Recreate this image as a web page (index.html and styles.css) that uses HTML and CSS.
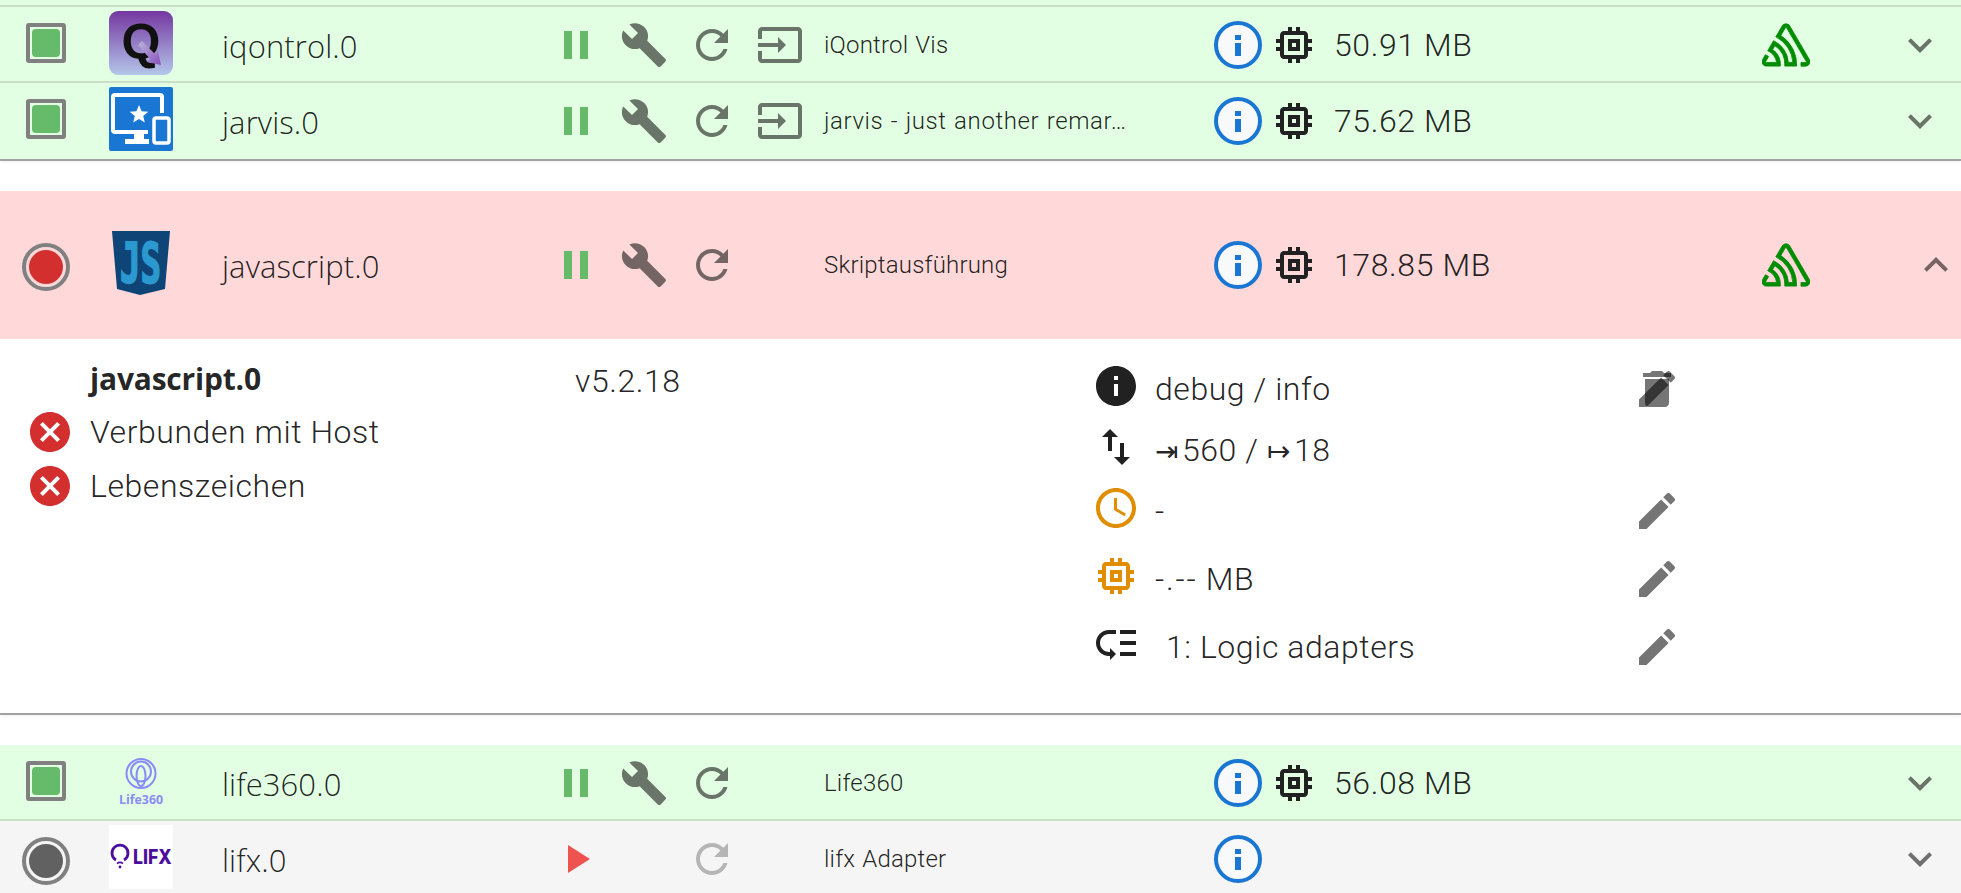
FILE: index.html
```html
<!DOCTYPE html>
<html lang="de">
<head>
<meta charset="utf-8">
<title>Instanzen</title>
<link rel="stylesheet" href="styles.css">
</head>
<body>
<svg class="defs" xmlns="http://www.w3.org/2000/svg">
  <symbol id="pause" viewBox="0 0 24 24"><path d="M6 19h4V5H6v14zm8-14v14h4V5h-4z"/></symbol>
  <symbol id="play" viewBox="0 0 24 24"><path d="M8 5v14l11-7z"/></symbol>
  <symbol id="build" viewBox="0 0 24 24"><path d="M22.7 19l-9.1-9.1c.9-2.3.4-5-1.5-6.9-2-2-5-2.4-7.4-1.3L9 6 6 9 1.6 4.7C.4 7.1.9 10.1 2.9 12.1c1.9 1.9 4.6 2.4 6.9 1.5l9.1 9.1c.4.4 1 .4 1.4 0l2.3-2.3c.5-.4.5-1.1.1-1.4z"/></symbol>
  <symbol id="refresh" viewBox="0 0 24 24"><path d="M17.65 6.35C16.2 4.9 14.21 4 12 4c-4.42 0-7.99 3.58-7.99 8s3.57 8 7.99 8c3.73 0 6.84-2.55 7.73-6h-2.08c-.82 2.33-3.04 4-5.65 4-3.31 0-6-2.69-6-6s2.69-6 6-6c1.66 0 3.14.69 4.22 1.78L13 11h7V4l-2.35 2.35z"/></symbol>
  <symbol id="input" viewBox="0 0 24 24"><path d="M21 3.01H3c-1.1 0-2 .9-2 2V9h2V4.99h18v14.03H3V15H1v4.01c0 1.1.9 1.98 2 1.98h18c1.1 0 2-.88 2-1.98v-14c0-1.11-.9-2-2-2zM11 16l4-4-4-4v3H1v2h10v3z"/></symbol>
  <symbol id="memory" viewBox="0 0 24 24"><path d="M15 9H9v6h6V9zm-2 4h-2v-2h2v2zm8-2V9h-2V7c0-1.1-.9-2-2-2h-2V3h-2v2h-2V3H9v2H7c-1.1 0-2 .9-2 2v2H3v2h2v2H3v2h2v2c0 1.1.9 2 2 2h2v2h2v-2h2v2h2v-2h2c1.1 0 2-.9 2-2v-2h2v-2h-2v-2h2zm-4 6H7V7h10v10z"/></symbol>
  <symbol id="sentry" viewBox="0 0 24 24"><path d="M13.91 2.505c-.873-1.448-2.972-1.448-3.844 0L6.904 7.92a15.478 15.478 0 0 1 8.53 12.811h-2.221A13.301 13.301 0 0 0 5.784 9.814l-2.926 5.06a7.65 7.65 0 0 1 4.435 5.848H2.194a.365.365 0 0 1-.298-.534l1.413-2.402a5.16 5.16 0 0 0-1.614-.913L.296 19.275a2.182 2.182 0 0 0 .812 2.999 2.24 2.24 0 0 0 1.086.288h6.983a9.322 9.322 0 0 0-3.845-8.318l1.11-1.922a11.47 11.47 0 0 1 4.95 10.24h5.915a17.242 17.242 0 0 0-7.885-15.28l2.244-3.845a.37.37 0 0 1 .504-.13c.255.14 9.75 16.708 9.928 16.9a.365.365 0 0 1-.327.543h-2.287c.029.612.029 1.223 0 1.831h2.297a2.206 2.206 0 0 0 1.922-3.31z"/></symbol>
  <symbol id="more" viewBox="0 0 24 24"><path d="M16.59 8.59L12 13.17 7.41 8.59 6 10l6 6 6-6z"/></symbol>
  <symbol id="less" viewBox="0 0 24 24"><path d="M12 8l-6 6 1.41 1.41L12 10.83l4.59 4.58L18 14z"/></symbol>
  <symbol id="cancel" viewBox="0 0 24 24"><path d="M12 2C6.47 2 2 6.47 2 12s4.47 10 10 10 10-4.47 10-10S17.53 2 12 2zm5 13.59L15.59 17 12 13.41 8.41 17 7 15.59 10.59 12 7 8.41 8.41 7 12 10.59 15.59 7 17 8.41 13.41 12 17 15.59z"/></symbol>
  <symbol id="info" viewBox="0 0 24 24"><path d="M12 2C6.48 2 2 6.48 2 12s4.48 10 10 10 10-4.48 10-10S17.52 2 12 2zm1 15h-2v-6h2v6zm0-8h-2V7h2v2z"/></symbol>
  <symbol id="swap" viewBox="0 0 24 24"><path d="M16 17.01V10h-2v7.01h-3L15 21l4-3.99h-3zM9 3L5 6.99h3V14h2V6.99h3L9 3z"/></symbol>
  <symbol id="clock" viewBox="0 0 24 24"><path d="M11.99 2C6.47 2 2 6.48 2 12s4.47 10 9.99 10C17.52 22 22 17.52 22 12S17.52 2 11.99 2zM12 20c-4.42 0-8-3.58-8-8s3.58-8 8-8 8 3.58 8 8-3.58 8-8 8zM12.5 7H11v6l5.25 3.15.75-1.23-4.5-2.67z"/></symbol>
  <symbol id="group" viewBox="0 0 24 24"><path d="M14 5h8v2h-8zm0 5.5h8v2h-8zm0 5.5h8v2h-8zM2 11.5C2 15.08 4.92 18 8.5 18H9v2l3-3-3-3v2h-.5C6.02 16 4 13.98 4 11.5S6.02 7 8.5 7H12V5H8.5C4.92 5 2 7.92 2 11.5z"/></symbol>
  <symbol id="edit" viewBox="0 0 24 24"><path d="M3 17.25V21h3.75L17.81 9.94l-3.75-3.75L3 17.25zM20.71 7.04c.39-.39.39-1.02 0-1.41l-2.34-2.34c-.39-.39-1.02-.39-1.41 0l-1.83 1.83 3.75 3.75 1.83-1.83z"/></symbol>
  <symbol id="delete" viewBox="0 0 24 24"><path d="M6 19c0 1.1.9 2 2 2h8c1.1 0 2-.9 2-2V7H6v12zM19 4h-3.5l-1-1h-5l-1 1H5v2h14V4z"/></symbol>
  <symbol id="infoline" viewBox="0 0 48 48">
    <circle class="info-ring" cx="24" cy="24" r="22"/>
    <rect class="info-mark" x="21" y="14" width="6" height="5"/>
    <rect class="info-mark" x="21" y="22" width="6" height="13"/>
  </symbol>
</svg>

<div class="row row-green row-stub"></div>

<section class="group">
  <div class="row row-green">
    <div class="status-square"><span class="status-square-fill"></span></div>
    <svg class="logo" viewBox="0 0 64 64">
      <defs>
        <linearGradient id="iqbg" x1="0" y1="0" x2="0" y2="1"><stop offset="0" stop-color="#7437a0"/><stop offset="1" stop-color="#b4c6ea"/></linearGradient>
        <linearGradient id="iqarrow" x1="0" y1="0" x2="1" y2="1"><stop offset="0" stop-color="#b9b6dc"/><stop offset="1" stop-color="#8a50bb"/></linearGradient>
      </defs>
      <rect width="64" height="64" rx="9" fill="url(#iqbg)"/>
      <text class="logo-q" x="32" y="48" text-anchor="middle">Q</text>
      <path d="M29 34l4-4 13 13 3-3 3 14-14-3 3-3z" fill="url(#iqarrow)"/>
    </svg>
    <div class="name">iqontrol.0</div>
    <svg class="ico ico-pause"><use href="#pause"/></svg>
    <svg class="ico ico-action"><use href="#build"/></svg>
    <svg class="ico ico-action"><use href="#refresh"/></svg>
    <svg class="ico ico-action"><use href="#input"/></svg>
    <div class="desc">iQontrol Vis</div>
    <svg class="ico"><use href="#infoline"/></svg>
    <svg class="ico ico-dark"><use href="#memory"/></svg>
    <div class="mem">50.91 MB</div>
    <svg class="ico ico-sentry"><use href="#sentry"/></svg>
    <svg class="ico ico-action"><use href="#more"/></svg>
  </div>
  <div class="row row-green row-last">
    <div class="status-square"><span class="status-square-fill"></span></div>
    <svg class="logo" viewBox="0 0 64 64">
      <rect width="64" height="64" rx="2" fill="#1976d2"/>
      <path d="M53 26V10a2 2 0 0 0-2-2H6a2 2 0 0 0-2 2v33a2 2 0 0 0 2 2h33" fill="none" stroke="#fff" stroke-width="4"/>
      <path d="M30 18l2.600 6.200 6.700.5-5.100 4.400 1.600 6.500-5.800-3.500-5.800 3.500 1.600-6.500-5.100-4.400 6.700-.5z" fill="#fff"/>
      <path d="M25 45h10v7h5v5H16v-5h9z" fill="#fff"/>
      <rect x="45" y="31" width="15" height="25" rx="2" fill="#1976d2" stroke="#fff" stroke-width="3.500"/>
    </svg>
    <div class="name">jarvis.0</div>
    <svg class="ico ico-pause"><use href="#pause"/></svg>
    <svg class="ico ico-action"><use href="#build"/></svg>
    <svg class="ico ico-action"><use href="#refresh"/></svg>
    <svg class="ico ico-action"><use href="#input"/></svg>
    <div class="desc desc-long">jarvis - just another remar…</div>
    <svg class="ico"><use href="#infoline"/></svg>
    <svg class="ico ico-dark"><use href="#memory"/></svg>
    <div class="mem">75.62 MB</div>
    <span></span>
    <svg class="ico ico-action"><use href="#more"/></svg>
  </div>
</section>

<section class="group group-open">
  <div class="row row-red">
    <div class="status-round status-round-red"><span></span></div>
    <svg class="logo" viewBox="0 0 64 64">
      <path d="M3 0h58l-5 58-25 6-23-6z" fill="#0f4476"/>
      <g transform="translate(11 51) scale(.62 1)">
        <text class="logo-js">JS</text>
      </g>
    </svg>
    <div class="name">javascript.0</div>
    <svg class="ico ico-pause"><use href="#pause"/></svg>
    <svg class="ico ico-action"><use href="#build"/></svg>
    <svg class="ico ico-action"><use href="#refresh"/></svg>
    <span></span>
    <div class="desc">Skriptausführung</div>
    <svg class="ico"><use href="#infoline"/></svg>
    <svg class="ico ico-dark"><use href="#memory"/></svg>
    <div class="mem">178.85 MB</div>
    <svg class="ico ico-sentry"><use href="#sentry"/></svg>
    <svg class="ico ico-action ico-open"><use href="#less"/></svg>
  </div>
  <div class="details">
    <div class="details-left">
      <div class="details-title">javascript.0</div>
      <div class="check-row"><svg class="ico ico-error"><use href="#cancel"/></svg><span>Verbunden mit Host</span></div>
      <div class="check-row"><svg class="ico ico-error"><use href="#cancel"/></svg><span>Lebenszeichen</span></div>
    </div>
    <div class="details-version">v5.2.18</div>
    <div class="details-right">
      <div class="prop prop-first">
        <svg class="ico ico-dark"><use href="#info"/></svg>
        <span class="prop-text">debug / info</span>
        <span class="prop-edit"><svg class="ico ico-action"><use href="#delete"/></svg><svg class="ico ico-action ico-overlay"><use href="#edit"/></svg></span>
      </div>
      <div class="prop prop-first">
        <svg class="ico ico-dark"><use href="#swap"/></svg>
        <span class="prop-text"><span class="arrow">⇥</span>560 / <span class="arrow">↦</span>18</span>
      </div>
      <div class="prop">
        <svg class="ico ico-warn"><use href="#clock"/></svg>
        <span class="prop-text">-</span>
        <span class="prop-edit"><svg class="ico ico-action"><use href="#edit"/></svg></span>
      </div>
      <div class="prop">
        <svg class="ico ico-warn"><use href="#memory"/></svg>
        <span class="prop-text"><span class="dashes">-.--</span> MB</span>
        <span class="prop-edit"><svg class="ico ico-action"><use href="#edit"/></svg></span>
      </div>
      <div class="prop">
        <svg class="ico ico-dark"><use href="#group"/></svg>
        <span class="prop-text prop-text-group">1: Logic adapters</span>
        <span class="prop-edit"><svg class="ico ico-action"><use href="#edit"/></svg></span>
      </div>
    </div>
  </div>
</section>

<section class="group">
  <div class="row row-green row-first">
    <div class="status-square"><span class="status-square-fill"></span></div>
    <svg class="logo" viewBox="0 0 64 64">
      <g fill="none" stroke="#8a8cf5" stroke-width="2">
        <circle cx="32" cy="24.500" r="14.500"/>
        <circle cx="32" cy="22.500" r="10"/>
        <ellipse cx="32" cy="27" rx="4.500" ry="10"/>
      </g>
      <text class="logo-life" x="32" y="55" text-anchor="middle" textLength="44" lengthAdjust="spacingAndGlyphs">Life360</text>
    </svg>
    <div class="name">life360.0</div>
    <svg class="ico ico-pause"><use href="#pause"/></svg>
    <svg class="ico ico-action"><use href="#build"/></svg>
    <svg class="ico ico-action"><use href="#refresh"/></svg>
    <span></span>
    <div class="desc">Life360</div>
    <svg class="ico"><use href="#infoline"/></svg>
    <svg class="ico ico-dark"><use href="#memory"/></svg>
    <div class="mem">56.08 MB</div>
    <span></span>
    <svg class="ico ico-action"><use href="#more"/></svg>
  </div>
  <div class="row row-grey">
    <div class="status-round status-round-grey"><span></span></div>
    <svg class="logo" viewBox="0 0 64 64">
      <rect width="64" height="64" fill="#fff"/>
      <g fill="none" stroke="#4b0f9e" stroke-width="2.800">
        <path d="M7 35a8 8 0 1 1 8 0"/>
        <path d="M8 38.500a5 5 0 0 1 6 0" stroke-width="1.600"/>
      </g>
      <circle cx="11" cy="42" r="1.400" fill="#4b0f9e"/>
      <g transform="translate(24 39) scale(.88 1)">
        <text class="logo-lifx">LIFX</text>
      </g>
    </svg>
    <div class="name">lifx.0</div>
    <svg class="ico ico-play"><use href="#play"/></svg>
    <span></span>
    <svg class="ico ico-disabled"><use href="#refresh"/></svg>
    <span></span>
    <div class="desc">lifx Adapter</div>
    <svg class="ico"><use href="#infoline"/></svg>
    <span></span>
    <span></span>
    <span></span>
    <svg class="ico ico-action"><use href="#more"/></svg>
  </div>
</section>
</body>
</html>
```

FILE: styles.css
```css
* { box-sizing: border-box; }
html, body { margin: 0; padding: 0; height: 893px; overflow: hidden; background: #fff; }
body { font-family: Roboto, "Liberation Sans", sans-serif; font-weight: 300; color: rgba(0, 0, 0, .87); }

.defs { display: none; }

.ico { width: 48px; height: 48px; display: block; flex: none; }
.ico-pause { fill: #66bb6a; }
.ico-play { fill: #ef5350; }
.ico-action { fill: rgba(0, 0, 0, .54); }
.ico-disabled { fill: rgba(0, 0, 0, .26); }
.ico-dark { fill: #212121; }
.ico-sentry { fill: #008c00; stroke: #008c00; stroke-width: .4; }
.ico-error { fill: #d32f2f; }
.ico-warn { fill: #e08e00; }
.ico-open { margin-left: 16px; }
.info-ring { fill: #f8f9fb; stroke: #1976d2; stroke-width: 4; }
.info-mark { fill: #1976d2; }

.group { box-shadow: 0 2px 0 rgba(0,0,0,.33), 0 3px 3px rgba(0,0,0,.06); }
.group-open { margin: 32px 0; }

.row {
  display: grid;
  grid-template-columns: 87px 113px 330px 68px 68px 68px 68px 390px 56px 64px 428px 134px 1fr;
  align-items: center;
  height: 76px;
  padding: 2px 0 0 22px;
  border-top: 2px solid #c8e0c8;
}
.row-stub { height: 5px; padding: 0; border: 0; display: block; }
.row-last { height: 78px; padding-bottom: 2px; }
.row-first { height: 74px; border-top: 0; }
.row-green { background: #e3ffe3; }
.row-grey { background: #f5f5f5; }
.row-red {
  background: #ffd9d9;
  height: 148px;
  padding-top: 0;
  border-top: 0;
}

.status-square {
  width: 40px; height: 40px; margin: 0 4px 4px;
  border: 4px solid #808080; border-radius: 3px;
  display: grid; place-items: center;
}
.status-square-fill { width: 28px; height: 28px; border-radius: 4px; background: #66bb6a; }
.status-round {
  width: 48px; height: 48px; margin-top: 4px;
  border: 4px solid #808080; border-radius: 50%;
  display: grid; place-items: center;
}
.status-round span { width: 34px; height: 34px; border-radius: 50%; }
.status-round-red span { background: #d32f2f; }
.status-round-grey span { background: #616161; }

.logo { width: 64px; height: 64px; display: block; margin-bottom: 4px; }
.logo-q { font: 700 50px "Liberation Sans", sans-serif; fill: #111; }
.logo-js { font: 700 55px "DejaVu Sans Mono", monospace; fill: #2b98d0; stroke: #2b98d0; stroke-width: 2px; }
.logo-life { font: 700 13px "Open Sans", sans-serif; fill: #8a8cf5; }
.logo-lifx { font: 800 20px Inter, "Liberation Sans", sans-serif; fill: #4b0f9e; }

.name {
  font-family: "Open Sans", "Noto Sans", sans-serif; font-size: 31px; letter-spacing: .1px;
  white-space: nowrap; padding-top: 2px;
}
.desc { font-size: 24px; letter-spacing: .2px; word-spacing: 1px; white-space: nowrap; }
.desc-long { letter-spacing: .6px; }
.mem { font-size: 32px; letter-spacing: .6px; white-space: nowrap; }

.details {
  display: grid;
  grid-template-columns: 550px 516px 1fr;
  height: 374px;
  padding: 23px 0 0 26px;
  background: #fff;
  font-size: 32px;
  letter-spacing: .55px;
}
.details-title {
  height: 46px; line-height: 34px; padding-left: 64px;
  font-family: "Open Sans", "Noto Sans", sans-serif; font-weight: 700; font-size: 30px; letter-spacing: -.2px;
}
.check-row { display: flex; height: 54px; line-height: 48px; gap: 16px; align-items: flex-start; }
.details-version { line-height: 38px; margin-left: -1px; }
.details-right { width: 589px; }
.prop { display: flex; height: 68px; align-items: flex-start; }
.prop-first { height: 61px; }
.prop-text { margin: 3px 0 0 15px; line-height: 48px; white-space: nowrap; }
.prop-text-group { margin-left: 26px; }
.dashes { letter-spacing: 1.8px; }
.arrow { display: inline-block; width: 27px; font-family: "DejaVu Sans", sans-serif; font-size: 28px; }
.prop-edit { position: relative; margin: 3px 0 0 auto; }
.ico-overlay { position: absolute; left: 0; top: 0; }
```
